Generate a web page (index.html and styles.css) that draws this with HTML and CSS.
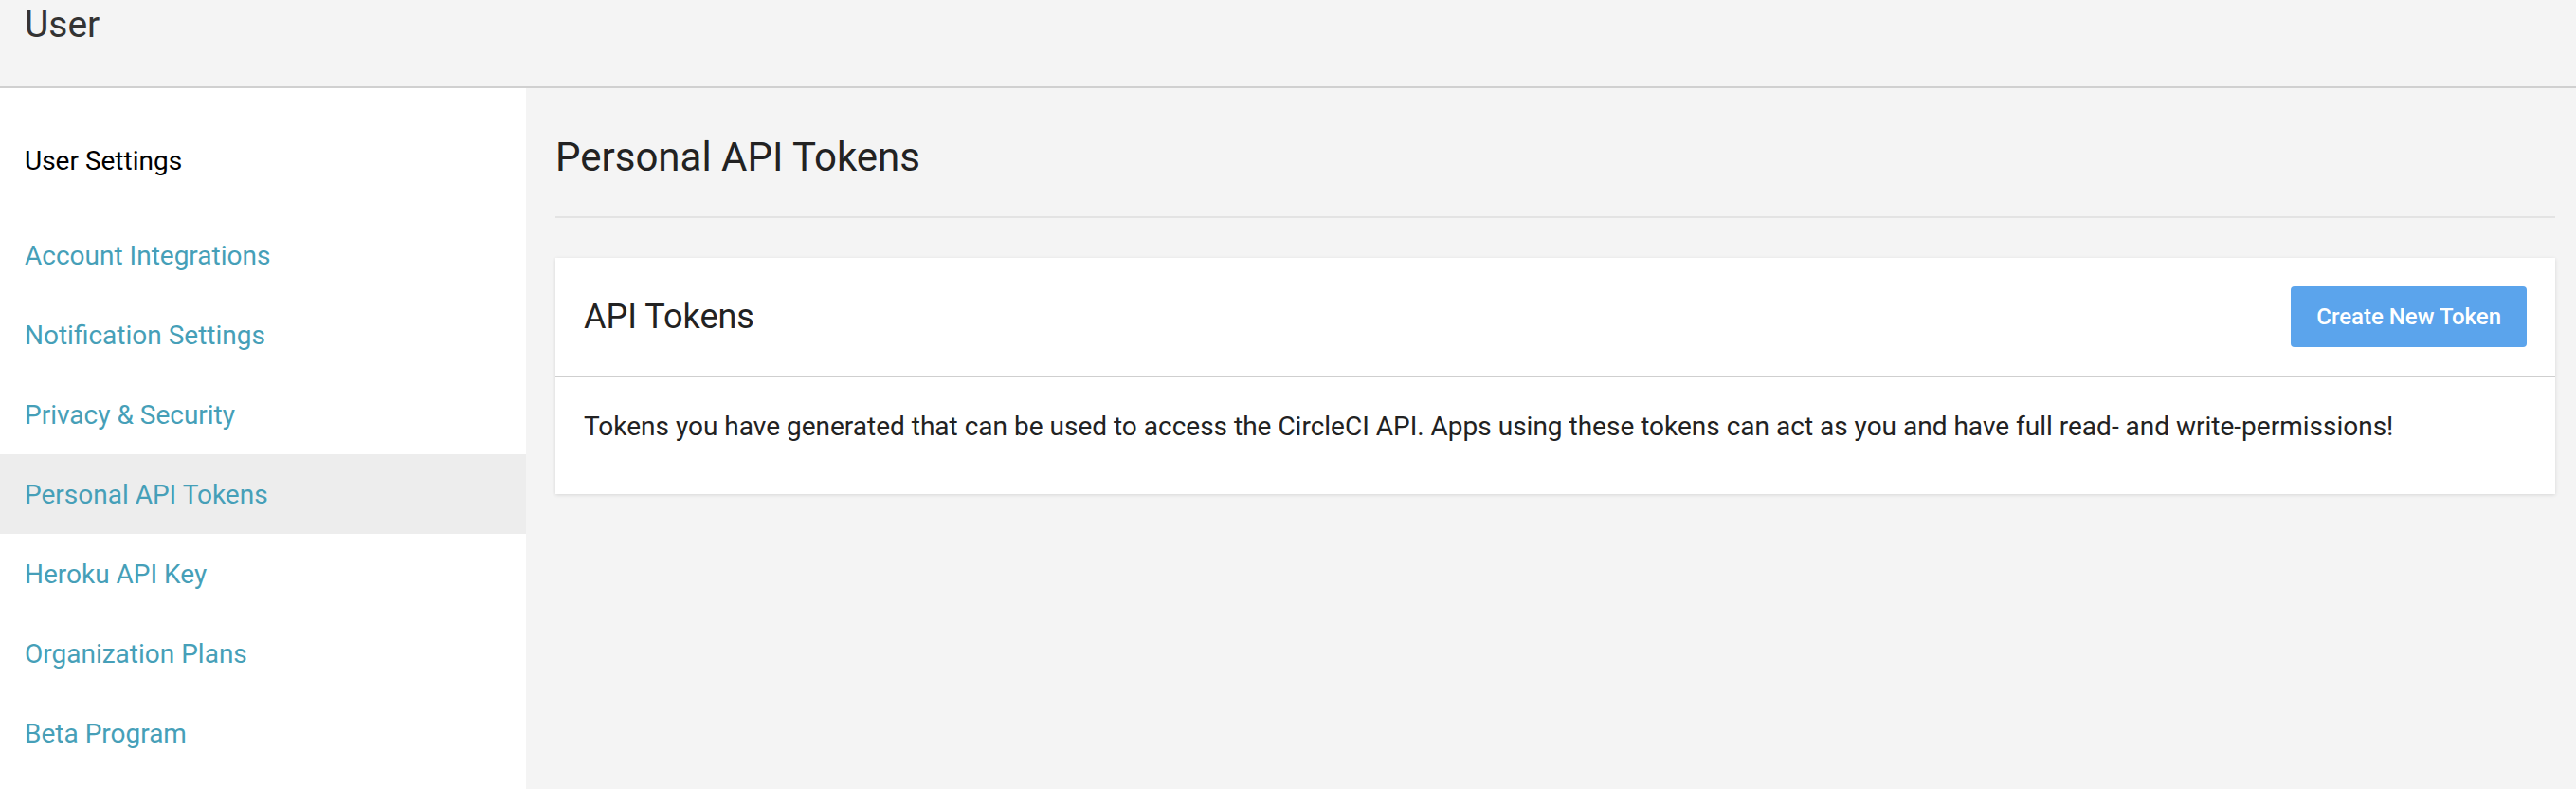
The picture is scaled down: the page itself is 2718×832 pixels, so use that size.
FILE: index.html
```html
<!DOCTYPE html>
<html lang="en">
<head>
<meta charset="utf-8">
<title>User – Personal API Tokens</title>
<link rel="stylesheet" href="styles.css">
</head>
<body>
<div class="app">
  <header class="topbar">
    <h1 class="topbar-title">User</h1>
  </header>
  <div class="layout">
    <nav class="sidebar">
      <div class="sidebar-heading">User Settings</div>
      <ul class="nav-list">
        <li class="nav-item"><a href="#">Account Integrations</a></li>
        <li class="nav-item"><a href="#">Notification Settings</a></li>
        <li class="nav-item"><a href="#">Privacy &amp; Security</a></li>
        <li class="nav-item active"><a href="#">Personal API Tokens</a></li>
        <li class="nav-item"><a href="#">Heroku API Key</a></li>
        <li class="nav-item"><a href="#">Organization Plans</a></li>
        <li class="nav-item"><a href="#">Beta Program</a></li>
      </ul>
    </nav>
    <main class="content">
      <h2 class="page-title">Personal API Tokens</h2>
      <section class="card">
        <div class="card-header">
          <h3 class="card-title">API Tokens</h3>
          <button class="btn-primary" type="button">Create New Token</button>
        </div>
        <div class="card-body">
          <p>Tokens you have generated that can be used to access the CircleCI API. Apps using these tokens can act as you and have full read- and write-permissions!</p>
        </div>
      </section>
    </main>
  </div>
</div>
</body>
</html>
```

FILE: styles.css
```css
* { box-sizing: border-box; }

html, body {
  margin: 0;
  padding: 0;
  height: 100%;
}

body {
  font-family: Roboto, "Liberation Sans", Arial, sans-serif;
  background: #f4f4f4;
  color: #222;
}

.app {
  display: flex;
  flex-direction: column;
  min-height: 100vh;
}

.topbar {
  height: 93px;
  background: #f4f4f4;
  border-bottom: 2px solid #d0d0d0;
  padding: 3px 0 0 26px;
}

.topbar-title {
  margin: 0;
  font-size: 39px;
  line-height: 46px;
  font-weight: 400;
  color: #333;
}

.layout {
  flex: 1;
  display: flex;
}

.sidebar {
  width: 555px;
  flex: 0 0 555px;
  background: #fff;
}

.sidebar-heading {
  padding: 56px 0 36px 26px;
  font-size: 28px;
  line-height: 42px;
  color: #000;
}

.nav-list {
  list-style: none;
  margin: 0;
  padding: 0;
}

.nav-item {
  height: 84px;
  display: flex;
  align-items: center;
  padding-left: 26px;
}

.nav-item.active {
  background: #ededed;
}

.nav-item a {
  font-size: 28px;
  color: #469fb8;
  text-decoration: none;
}

.content {
  flex: 1;
  padding: 48px 22px 0 31px;
}

.page-title {
  margin: 0;
  font-size: 42px;
  line-height: 50px;
  font-weight: 400;
  color: #222;
  padding-bottom: 37px;
  border-bottom: 2px solid #e3e3e3;
}

.card {
  margin-top: 42px;
  background: #fff;
  box-shadow: 0 1px 4px rgba(0, 0, 0, 0.12);
}

.card-header {
  display: flex;
  align-items: center;
  justify-content: space-between;
  padding: 30px 30px 30px 30px;
  border-bottom: 2px solid #cfcfcf;
}

.card-title {
  margin: 0;
  font-size: 36px;
  line-height: 42px;
  font-weight: 400;
  color: #222;
}

.btn-primary {
  height: 64px;
  padding: 0 27px;
  border: none;
  border-radius: 4px;
  background: #5ba4ec;
  color: #fff;
  font-family: Roboto, "Liberation Sans", Arial, sans-serif;
  font-size: 24px;
  font-weight: 500;
}

.card-body {
  padding: 31px 30px 50px 30px;
}

.card-body p {
  margin: 0;
  font-size: 28px;
  line-height: 42px;
  color: #222;
}
```
